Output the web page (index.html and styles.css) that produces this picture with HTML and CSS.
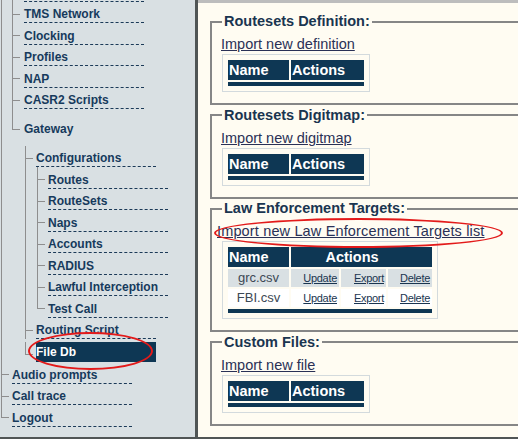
FILE: index.html
```html
<!DOCTYPE html>
<html lang="en">
<head>
<meta charset="utf-8">
<title>File Db</title>
<link rel="stylesheet" href="styles.css">
</head>
<body>
<div class="page">
  <div class="main">
    <nav class="sidebar">
      <ul class="tree root">
        <li class="node">
          <ul class="tree l1">
            <li><span class="item item-offscreen"></span></li>
            <li><a class="item" href="#">TMS Network</a></li>
            <li><a class="item" href="#">Clocking</a></li>
            <li><a class="item" href="#">Profiles</a></li>
            <li><a class="item" href="#">NAP</a></li>
            <li><a class="item" href="#">CASR2 Scripts</a></li>
            <li class="gateway"><span class="label">Gateway</span>
              <ul class="tree sub">
                <li><a class="item" href="#">Configurations</a>
                  <ul class="tree sub">
                    <li><a class="item" href="#">Routes</a></li>
                    <li><a class="item" href="#">RouteSets</a></li>
                    <li><a class="item" href="#">Naps</a></li>
                    <li><a class="item" href="#">Accounts</a></li>
                    <li><a class="item" href="#">RADIUS</a></li>
                    <li><a class="item" href="#">Lawful Interception</a></li>
                    <li><a class="item" href="#">Test Call</a></li>
                  </ul>
                </li>
                <li><a class="item" href="#">Routing Script</a></li>
                <li class="current"><a class="item selected" href="#">File Db</a></li>
              </ul>
            </li>
          </ul>
        </li>
        <li><a class="item" href="#">Audio prompts</a></li>
        <li><a class="item" href="#">Call trace</a></li>
        <li><a class="item" href="#">Logout</a></li>
      </ul>
    </nav>

    <main class="content">
      <fieldset class="group">
        <legend>Routesets Definition:</legend>
        <a class="import" href="#">Import new definition</a>
        <div class="grid-box">
          <table class="grid">
            <colgroup><col class="c-name"><col class="c-actions"></colgroup>
            <thead><tr><th>Name</th><th>Actions</th></tr></thead>
            <tfoot><tr><td colspan="2"></td></tr></tfoot>
          </table>
        </div>
      </fieldset>

      <fieldset class="group">
        <legend>Routesets Digitmap:</legend>
        <a class="import" href="#">Import new digitmap</a>
        <div class="grid-box">
          <table class="grid">
            <colgroup><col class="c-name"><col class="c-actions"></colgroup>
            <thead><tr><th>Name</th><th>Actions</th></tr></thead>
            <tfoot><tr><td colspan="2"></td></tr></tfoot>
          </table>
        </div>
      </fieldset>

      <fieldset class="group">
        <legend>Law Enforcement Targets:</legend>
        <a class="import import-wide" href="#">Import new Law Enforcement Targets list</a>
        <div class="grid-box">
          <table class="grid">
            <colgroup><col class="c-name"><col class="c-update"><col class="c-export"><col class="c-delete"></colgroup>
            <thead><tr><th>Name</th><th colspan="3" class="th-span">Actions</th></tr></thead>
            <tbody>
              <tr class="odd"><td class="fname">grc.csv</td><td class="act"><a href="#">Update</a></td><td class="act"><a href="#">Export</a></td><td class="act"><a href="#">Delete</a></td></tr>
              <tr class="even"><td class="fname">FBI.csv</td><td class="act"><a href="#">Update</a></td><td class="act"><a href="#">Export</a></td><td class="act"><a href="#">Delete</a></td></tr>
            </tbody>
            <tfoot><tr><td colspan="4"></td></tr></tfoot>
          </table>
        </div>
      </fieldset>

      <fieldset class="group">
        <legend>Custom Files:</legend>
        <a class="import" href="#">Import new file</a>
        <div class="grid-box">
          <table class="grid">
            <colgroup><col class="c-name"><col class="c-actions"></colgroup>
            <thead><tr><th>Name</th><th>Actions</th></tr></thead>
            <tfoot><tr><td colspan="2"></td></tr></tfoot>
          </table>
        </div>
      </fieldset>
    </main>
  </div>
  <div class="bottom-bar"></div>

  <div class="mark mark-filedb"></div>
  <div class="mark mark-law"></div>
</div>
</body>
</html>
```

FILE: styles.css
```css
html, body {
  margin: 0;
  padding: 0;
  overflow: hidden;
  background: #fffcf2;
}

.page {
  position: relative;
  width: 518px;
  height: 439px;
  overflow: hidden;
  font-family: "Liberation Sans", Arial, sans-serif;
}

.main {
  display: flex;
  height: 437px;
}

.bottom-bar {
  height: 10px;
  background: #505555;
}

/* ---------- Sidebar tree ---------- */
.sidebar {
  width: 195px;
  flex: none;
  background: #d9e0e3;
  border-right: 3px solid #505555;
  overflow: hidden;
}

.tree {
  list-style: none;
  margin: 0;
  padding: 0 0 0 1px;
}

.tree li {
  position: relative;
  padding-left: 11px;
}

.tree li::before {
  content: "";
  position: absolute;
  left: 0;
  top: 0;
  bottom: 0;
  border-left: 1px solid #8e8e8e;
}

.tree li::after {
  content: "";
  position: absolute;
  left: 0;
  top: 12px;
  width: 8px;
  border-top: 1px solid #8e8e8e;
}

.tree li:last-child::before {
  bottom: auto;
  height: 12px;
}

.root {
  margin-top: -20px;
}

.tree.l1 {
  padding-left: 0;
}

.tree.l1 > li {
  padding-left: 12px;
}

.tree.l1 > li.gateway::before {
  height: 20px;
}

.tree.l1 > li.gateway::after {
  top: 20px;
}

.item {
  display: block;
  width: 120px;
  padding: 5.5px 0 1px;
  line-height: 14px;
  border-bottom: 1px dashed #1b3a58;
  font-size: 12px;
  font-weight: bold;
  color: #163a5c;
  text-decoration: none;
  white-space: nowrap;
}

.item-offscreen {
  height: 14px;
}

.item.selected {
  margin-top: 3px;
  padding: 3px 0;
  border-bottom: none;
  background: #0e3754;
  color: #ffffff;
}

.label {
  display: block;
  padding: 13px 0 9.5px;
  line-height: 14px;
  font-size: 12px;
  font-weight: bold;
  color: #163a5c;
}

/* ---------- Content ---------- */
.content {
  flex: 1;
  min-width: 0;
  background: #fffcf2;
  border-top: 3px solid #bdbdbd;
  padding: 10px 0 0 12px;
  overflow: hidden;
}

.group {
  margin: 0 -40px 1.5px 0;
  padding: 0 0 11px 9px;
  border: 2px solid #868686;
  min-width: 0;
}

.group legend {
  margin-left: 1px;
  padding: 0 2px;
  font-size: 14.5px;
  line-height: 17px;
  font-weight: bold;
  color: #1a3550;
}

.import {
  display: block;
  width: max-content;
  margin: 6px 0 1px;
  font-size: 14.5px;
  line-height: 17px;
  color: #2a3156;
  text-decoration: underline;
}

.import-wide {
  margin-left: -4px;
  letter-spacing: 0.15px;
}

.grid-box {
  width: max-content;
  margin-left: 1px;
  padding: 3px;
  border: 1px solid #d3dadd;
}

.grid {
  border-collapse: separate;
  border-spacing: 2px;
  table-layout: fixed;
}

.c-name { width: 61px; }
.c-actions { width: 73px; }
.c-update { width: 48px; }
.c-export { width: 45px; }
.c-delete { width: 44px; }

.grid th {
  height: 20px;
  padding: 0 0 0 1px;
  background: #0e3754;
  color: #ffffff;
  font-size: 14.5px;
  line-height: 20px;
  font-weight: bold;
  text-align: left;
  white-space: nowrap;
}

.grid th.th-span {
  text-align: center;
  padding: 0 19px 0 0;
}

.grid tfoot td {
  height: 4px;
  padding: 0;
  background: #0e3754;
  font-size: 0;
  line-height: 0;
}

.grid tbody td {
  height: 18px;
  padding: 0;
  line-height: 18px;
}

.grid tr.odd td { background: #d9e0e3; }
.grid tr.even td { background: #ffffff; }

.grid td.fname {
  text-align: center;
  font-size: 13px;
  color: #3c4854;
}

.grid td.act {
  text-align: right;
  padding-right: 2px;
  font-size: 11px;
  letter-spacing: -0.3px;
}

.grid td.act a {
  color: #1a3550;
  text-decoration: underline;
}

/* ---------- Annotation marks ---------- */
.mark {
  position: absolute;
  box-sizing: border-box;
  border: 2px solid #e31a1a;
  border-radius: 50%;
  pointer-events: none;
}

.mark-filedb {
  left: 28px;
  top: 332px;
  width: 125px;
  height: 38px;
}

.mark-law {
  left: 214px;
  top: 218px;
  width: 289px;
  height: 30px;
}
```
